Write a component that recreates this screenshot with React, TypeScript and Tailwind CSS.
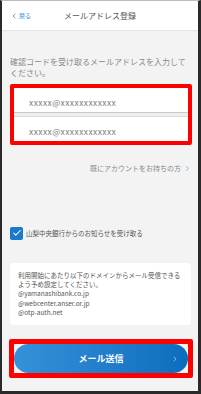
import { ChevronLeft, ChevronRight, Check } from 'lucide-react';

// Registration screen: email entry with red annotation boxes

const FONT = { fontFamily: '"Noto Sans CJK JP", "Noto Sans", sans-serif' };

function Header() {
  return (
    <div className="relative flex h-[30px] shrink-0 items-center justify-center border-b border-[#e3e3e3] bg-white">
      <div className="absolute left-[8px] top-0 flex h-full items-center gap-[1px] text-[#3d8fdf]">
        <ChevronLeft size={8} strokeWidth={2.5} />
        <span className="text-[6px] leading-none">戻る</span>
      </div>
      <span className="text-[8px] leading-none text-[#555]">メールアドレス登録</span>
    </div>
  );
}

function EmailInputs() {
  return (
    <div className="ml-[8px] mr-[6px] mt-[6px] h-[61px] overflow-hidden rounded-[2px] border-4 border-[#ff0000] bg-white">
      <div className="flex h-[25px] items-center border-b border-[#c9c9c9] pl-[15px] pt-[4px] text-[8.5px] leading-none tracking-[0.4px] text-[#7d7d7d]">
        xxxxx@xxxxxxxxxxxx
      </div>
      <div className="h-[4px] border-b border-[#dcdcdc] bg-[#efefef]" />
      <div className="flex h-[22px] items-center pl-[15px] pt-[6px] text-[8.5px] leading-none tracking-[0.4px] text-[#7d7d7d]">
        xxxxx@xxxxxxxxxxxx
      </div>
    </div>
  );
}

export default function App() {
  return (
    <div
      className="flex h-[394px] w-[201px] flex-col border-b-[3px] border-l-2 border-r-[3px] border-t border-b-[#2a2a2a] border-l-[#2a2a2a] border-r-[#2a2a2a] border-t-[#bdbdbd] bg-[#f3f3f3]"
      style={FONT}
    >
      <Header />

      <p className="px-[8px] pt-[25px] text-[8px] leading-[11px] text-[#8a8a8a]">
        確認コードを受け取るメールアドレスを入力して
        <br />
        ください。
      </p>

      <EmailInputs />

      <div className="mt-[18px] flex h-[10px] items-center justify-end gap-[3px] pr-[7px]">
        <span className="text-[7px] leading-none text-[#8a8a8a]">既にアカウントをお持ちの方</span>
        <ChevronRight size={7} strokeWidth={2.5} className="text-[#4a9be0]" />
      </div>

      <div className="mt-[53px] flex h-[14px] items-center gap-[3px] pl-[8px]">
        <span className="flex h-[13px] w-[13px] items-center justify-center rounded-[2px] bg-[#1b79c9]">
          <Check size={10} strokeWidth={2.5} className="text-white" />
        </span>
        <span className="text-[6.5px] leading-none text-[#555]">山梨中央銀行からのお知らせを受け取る</span>
      </div>

      <div className="ml-[8px] mr-[7px] mt-[23px] h-[62px] rounded-[4px] bg-white px-[8px] py-[8px] text-[6.5px] leading-[9.2px] whitespace-nowrap text-[#555]">
        <div>利用開始にあたり以下のドメインからメール受信できる</div>
        <div>よう予め設定してください。</div>
        <div>@yamanashibank.co.jp</div>
        <div>@webcenter.anser.or.jp</div>
        <div>@otp-auth.net</div>
      </div>

      <div className="ml-[7px] mr-[5px] mt-[14px] rounded-[2px] border-[5px] border-[#ff0000] bg-[#f3f3f3]">
        <button className="relative flex h-[29px] w-full items-center justify-center rounded-full bg-gradient-to-r from-[#3591d8] to-[#0b6dbe] text-white">
          <span className="text-[9px] font-bold leading-none">メール送信</span>
          <ChevronRight size={8} strokeWidth={2} className="absolute right-[9px] text-[#bcd9f2]" />
        </button>
      </div>
    </div>
  );
}
